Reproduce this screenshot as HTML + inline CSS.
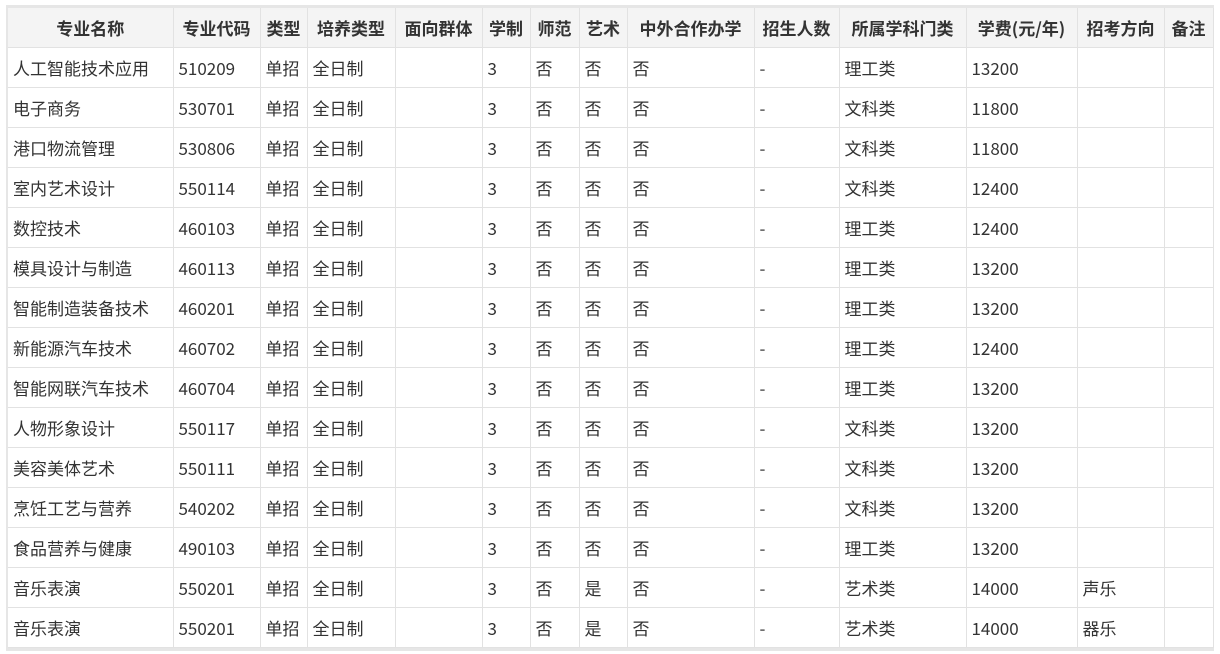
<!DOCTYPE html>
<html><head><meta charset="utf-8"><style>
html,body{margin:0;padding:0;background:#fff;width:1220px;height:654px;overflow:hidden}
.wrap{position:absolute;left:6px;top:5px;width:1206px;border-top:3px solid #e6e6e6;border-left:2px solid #e6e6e6;border-bottom:3px solid #e6e6e6}
table{border-collapse:collapse;table-layout:fixed;width:1205px;font-family:"Noto Sans CJK SC","Liberation Sans",sans-serif;font-size:17px;color:#333}
td,th{border:1px solid #e2e2e2;height:39px;line-height:20px;padding:0 0 0 5px;text-align:left;vertical-align:middle;white-space:nowrap;overflow:hidden}
th{background:#f4f4f4;font-weight:bold;text-align:center;padding:0;color:#333}
tr:first-child th{border-top:none}
td:first-child,th:first-child{border-left:none}
</style></head><body><div class="wrap"><table>
<colgroup><col style="width:165px"><col style="width:87px"><col style="width:47px"><col style="width:88px"><col style="width:87px"><col style="width:48px"><col style="width:49px"><col style="width:48px"><col style="width:127px"><col style="width:85px"><col style="width:127px"><col style="width:111px"><col style="width:87px"><col style="width:49px"></colgroup>
<tr><th>专业名称</th><th>专业代码</th><th>类型</th><th>培养类型</th><th>面向群体</th><th>学制</th><th>师范</th><th>艺术</th><th>中外合作办学</th><th>招生人数</th><th>所属学科门类</th><th>学费(元/年)</th><th>招考方向</th><th>备注</th></tr>
<tr><td>人工智能技术应用</td><td>510209</td><td>单招</td><td>全日制</td><td></td><td>3</td><td>否</td><td>否</td><td>否</td><td>-</td><td>理工类</td><td>13200</td><td></td><td></td></tr>
<tr><td>电子商务</td><td>530701</td><td>单招</td><td>全日制</td><td></td><td>3</td><td>否</td><td>否</td><td>否</td><td>-</td><td>文科类</td><td>11800</td><td></td><td></td></tr>
<tr><td>港口物流管理</td><td>530806</td><td>单招</td><td>全日制</td><td></td><td>3</td><td>否</td><td>否</td><td>否</td><td>-</td><td>文科类</td><td>11800</td><td></td><td></td></tr>
<tr><td>室内艺术设计</td><td>550114</td><td>单招</td><td>全日制</td><td></td><td>3</td><td>否</td><td>否</td><td>否</td><td>-</td><td>文科类</td><td>12400</td><td></td><td></td></tr>
<tr><td>数控技术</td><td>460103</td><td>单招</td><td>全日制</td><td></td><td>3</td><td>否</td><td>否</td><td>否</td><td>-</td><td>理工类</td><td>12400</td><td></td><td></td></tr>
<tr><td>模具设计与制造</td><td>460113</td><td>单招</td><td>全日制</td><td></td><td>3</td><td>否</td><td>否</td><td>否</td><td>-</td><td>理工类</td><td>13200</td><td></td><td></td></tr>
<tr><td>智能制造装备技术</td><td>460201</td><td>单招</td><td>全日制</td><td></td><td>3</td><td>否</td><td>否</td><td>否</td><td>-</td><td>理工类</td><td>13200</td><td></td><td></td></tr>
<tr><td>新能源汽车技术</td><td>460702</td><td>单招</td><td>全日制</td><td></td><td>3</td><td>否</td><td>否</td><td>否</td><td>-</td><td>理工类</td><td>12400</td><td></td><td></td></tr>
<tr><td>智能网联汽车技术</td><td>460704</td><td>单招</td><td>全日制</td><td></td><td>3</td><td>否</td><td>否</td><td>否</td><td>-</td><td>理工类</td><td>13200</td><td></td><td></td></tr>
<tr><td>人物形象设计</td><td>550117</td><td>单招</td><td>全日制</td><td></td><td>3</td><td>否</td><td>否</td><td>否</td><td>-</td><td>文科类</td><td>13200</td><td></td><td></td></tr>
<tr><td>美容美体艺术</td><td>550111</td><td>单招</td><td>全日制</td><td></td><td>3</td><td>否</td><td>否</td><td>否</td><td>-</td><td>文科类</td><td>13200</td><td></td><td></td></tr>
<tr><td>烹饪工艺与营养</td><td>540202</td><td>单招</td><td>全日制</td><td></td><td>3</td><td>否</td><td>否</td><td>否</td><td>-</td><td>文科类</td><td>13200</td><td></td><td></td></tr>
<tr><td>食品营养与健康</td><td>490103</td><td>单招</td><td>全日制</td><td></td><td>3</td><td>否</td><td>否</td><td>否</td><td>-</td><td>理工类</td><td>13200</td><td></td><td></td></tr>
<tr><td>音乐表演</td><td>550201</td><td>单招</td><td>全日制</td><td></td><td>3</td><td>否</td><td>是</td><td>否</td><td>-</td><td>艺术类</td><td>14000</td><td>声乐</td><td></td></tr>
<tr><td>音乐表演</td><td>550201</td><td>单招</td><td>全日制</td><td></td><td>3</td><td>否</td><td>是</td><td>否</td><td>-</td><td>艺术类</td><td>14000</td><td>器乐</td><td></td></tr>
</table></div></body></html>
